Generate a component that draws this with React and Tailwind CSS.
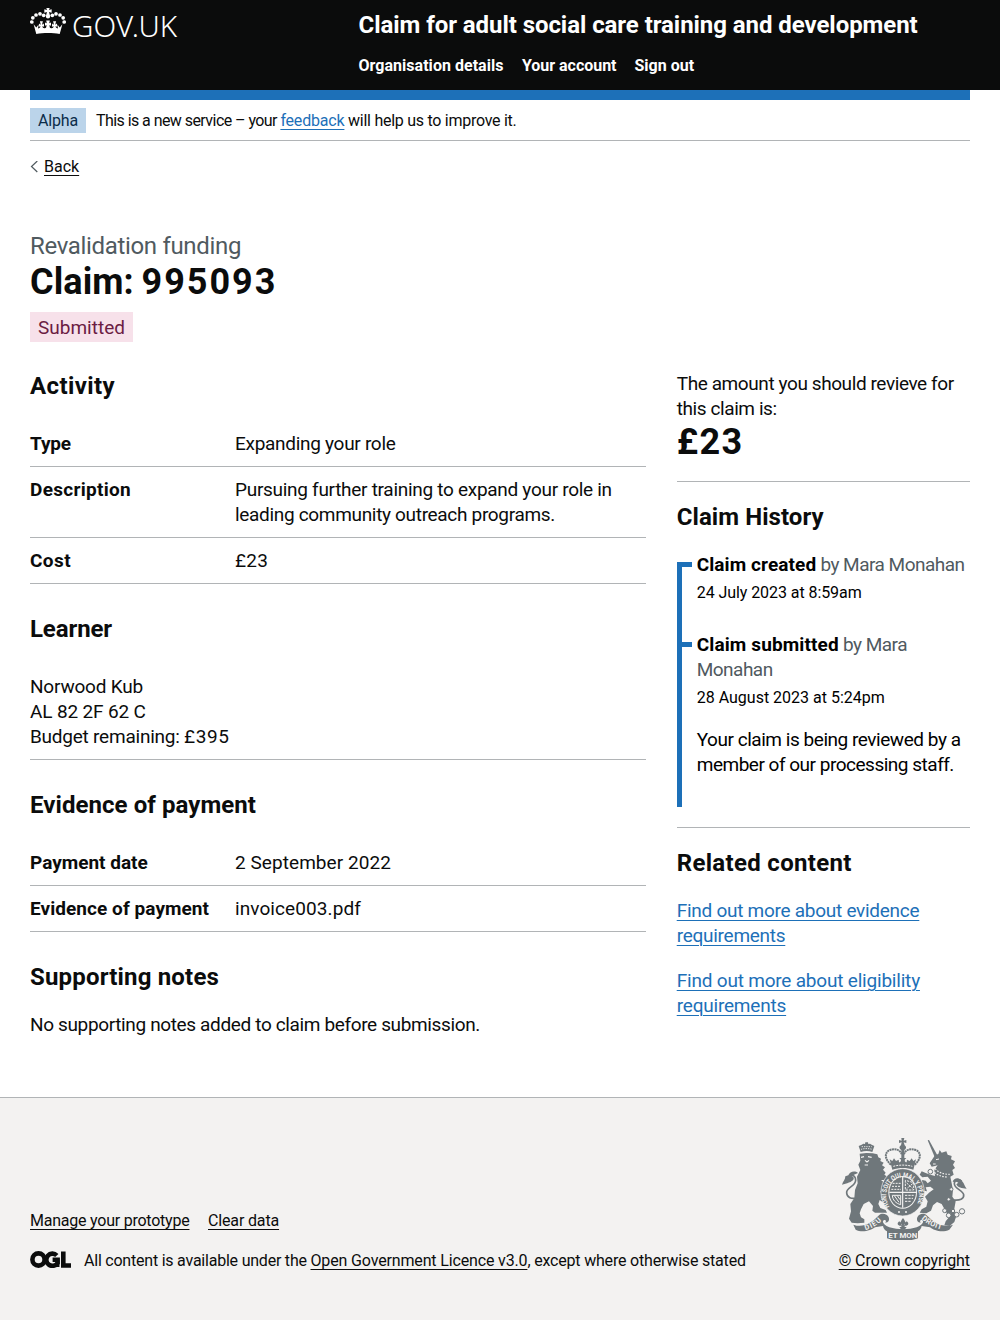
function Crown() {
  return (
    <svg className="h-[26px] w-9 shrink-0" viewBox="12 9 108 78" fill="#fff" aria-hidden="true">
      <circle cx="17.5" cy="51" r="5.6" />
      <circle cx="20.5" cy="38.5" r="5.6" />
      <circle cx="30" cy="30" r="5.6" />
      <circle cx="42" cy="26.5" r="5.6" />
      <circle cx="53" cy="31" r="5.6" />
      <circle cx="79" cy="31" r="5.6" />
      <circle cx="90" cy="26.5" r="5.6" />
      <circle cx="102" cy="30" r="5.6" />
      <circle cx="111.5" cy="38.5" r="5.6" />
      <circle cx="114.5" cy="51" r="5.6" />
      <path d="M61 9h10l-2 6 8-2v10l-8-2 3.500 13a6.500 6.500 0 1 1-13 0L63 21l-8 2V13l8 2z" />
      <path d="M27 87l-9-28 9 9 7-8-1 11c4 0 7-2 8-6l-6 1 1-9 6 3-3-10h10l-3 10 6-3 1 9-6-1c1 5 5 7 11 5 2-1 3-5 3-9l-5 2v-9l6 2-2-8h12l-2 8 6-2v9l-5-2c0 4 1 8 3 9 6 2 10 0 11-5l-6 1 1-9 6 3-3-10h10l-3 10 6-3 1 9-6-1c1 4 4 6 8 6l-1-11 7 8 9-9-9 28c-24-4-54-4-78 0z" transform="translate(6.600 -3.500) scale(.9 1.040)" />
    </svg>
  );
}

function Ogl() {
  return (
    <svg className="h-[17px] w-[41px] shrink-0" viewBox="0 0 41 17" fill="none" stroke="#0b0c0c" strokeWidth="4.600" aria-hidden="true">
      <circle cx="8.500" cy="8.500" r="6.100" />
      <path d="M26.800 4.500A6.100 6.100 0 1 0 27.600 12V8.700h-5" />
      <path d="M27.700 8.500V16" strokeWidth="3.500" />
      <path d="M33.300.5v14h7.700" />
    </svg>
  );
}

function Crest() {
  return (
    <svg className="h-[103px] w-[125px]" viewBox="51 21 375 309" fill="#6f777b" aria-hidden="true">
      {/* lion */}
      <path d="M107 66l-6-18 9-4 5-3 5 1 1-5h8l1 5 5-1 5 3 8 4-6 18c-10-4-24-4-35 0z" />
      <path d="M108 58c10-3 23-3 34 0M110 50h30" stroke="#f3f2f1" strokeWidth="2.500" strokeDasharray="4 3" fill="none" />
      <path d="M104 71l20-2 19 1 14 3 3 9 8 4-2 7 10 5-5 8 9 6-6 7 8 9-4 6 12 8-10 8-12 0 10 8-4 6 12 8-4 8-12-2-4 8 10 8-4 10 12 10-6 6-14-10-4 12 6 12 16 6 4 8h-36l-8-6 2-14-12-14-16 8-8 16-4 12 4 12 10 6v10l-20 2-18-2-8-12 6-22-2-22 12-18 2-24 8-20-2-20 10-20-6-16 6-12z" />
      <path d="M97 203c-18 6-31-1-32-14-2-18 26-18 27-38 0-11-6-16-14-14" fill="none" stroke="#6f777b" strokeWidth="5" />
      <path d="M99 129c-10-8-25-4-29 7l-9 3c0 10-7 15-10 25 13-4 31-7 35-17 1-5-2-8-6-8 5-5 12-7 19-10z" />
      <path d="M108 82l9-2m12 0 11 2m-20 9 6 5 6-5m-13 14h10" stroke="#f3f2f1" strokeWidth="3.500" fill="none" />
      {/* unicorn */}
      <path d="M308 31l4-1 25 46-8 5z" />
      <path d="M330 76l10-4 4-12 6 8 14-4 4 10 12 4-2 10 12 6-6 10 6 10-8 6 4 14-10 6 4 20 4 20-2 20 10 14-4 22 6 22-6 18-14 12-16-2 4-12 10-12-10-18-12-22-14-6-12 10-6 16-14 8-20-2 6-10 14-8 4-16-8-14 12-12 14-10-10-8-14 2 4 12-10-2-8-22 4-10 10 2 6 8 10-8-10-12-16 2-8-8 6-10 14 6 12 4 14 4-2-18 10-14-8 2-10 2-6-10 8-12z" />
      <path d="M330 116c12 12 25 17 44 17M328 127c12 10 24 14 42 14" stroke="#f3f2f1" strokeWidth="3.500" strokeDasharray="5 4" fill="none" />
      <path d="M333 89l9-2m-18 15 8 0" stroke="#f3f2f1" strokeWidth="3" />
      <path d="M384 210c20 2 34-2 32-16-3-15-29-17-28-34 1-13 14-14 22-6" fill="none" stroke="#6f777b" strokeWidth="5" />
      <path d="M383 156c3-13 20-15 28-3 8 8 7 16 14 23-14 0-28-4-31-13l6-5c-5-4-10-3-17-2z" />
      <g stroke="#6f777b" strokeWidth="3" fill="#f3f2f1">
        <circle cx="316" cy="125" r="7" /><circle cx="359" cy="242" r="6" /><circle cx="371" cy="256" r="7" /><circle cx="384" cy="243" r="5" /><circle cx="395" cy="254" r="7" /><circle cx="411" cy="244" r="8" /><circle cx="379" cy="178" r="5" /><circle cx="371" cy="208" r="5" />
      </g>
      {/* garter and quartered shield */}
      <ellipse cx="233" cy="187" rx="65" ry="71" stroke="#f3f2f1" strokeWidth="2" />
      <ellipse cx="233" cy="187" rx="43" ry="49" fill="#f3f2f1" />
      <ellipse cx="233" cy="187" rx="40" ry="46" />
      <path d="M233 141v92M193 187h80" stroke="#f3f2f1" strokeWidth="3.500" />
      <g stroke="#f3f2f1" fill="none" strokeWidth="3">
        <path d="M203 160h25m-27 9h27m-29 9h29" strokeDasharray="6 3" />
        <path d="M241 151v29h25v-22zm4 8 18 16m0-14-18 15M240 196h26m-26 9h24m-24 9h20" strokeDasharray="7 3" />
        <path d="M202 196c1 14 10 24 25 28v-28zm6 1 14 20m-5-20 8 12" />
      </g>
      <path id="garter-text" d="M195 232A49 55 0 1 1 271 232" fill="none" />
      <text fill="#f3f2f1" className="font-['Roboto',sans-serif] text-[21px] font-bold"><textPath href="#garter-text" textLength="222" startOffset="2" lengthAdjust="spacingAndGlyphs">HONI SOIT QUI MAL Y PENSE</textPath></text>
      <circle cx="222" cy="246" r="3" fill="#f3f2f1" /><circle cx="243" cy="246" r="3" fill="#f3f2f1" />
      {/* royal crown */}
      <path d="M229 24h9l-2 8 8-2v9l-8-2 3 9c7 5 4 12-1 14v44h-9V60c-6-3-8-10-1-14l2-9-8 2v-9l8 2z" />
      <path d="M198 104C179 88 177 67 195 60c16-6 32 0 35 13M269 104c19-16 21-37 3-44-16-6-32 0-35 13" fill="none" stroke="#6f777b" strokeWidth="6" strokeDasharray="6 1.500" />
      <path d="M202 119l-8-31 8 5 5-8 6 8 8-4 1 8c7-1 6-8 6-8l-5-5h21l-5 5s-1 7 6 8l1-8 8 4 6-8 5 8 8-5-8 31c-20-7-43-7-63 0z" />
      <path d="M205 109c18-5 38-5 57 0" stroke="#f3f2f1" strokeWidth="3" strokeDasharray="6 3" fill="none" />
      {/* motto ribbon */}
      <path d="M85 284c28 10 52-2 77-28 10-9 25-3 29 6 4 11-3 18-11 15 5-1 3-9-3-7-8 5-1 15 16 22 25 7 57 8 82 0 17-7 24-17 16-22-6-2-8 6-3 7-8 3-15-4-11-15 4-9 18-15 28-6 25 26 51 38 79 28l-11 15c-21 11-47 2-58-7l-25-4c-1 8-6 13-11 16v21c-29 10-64 10-93 0v-21c-6-3-11-8-12-16l-24 4c-12 9-39 18-58 7z" />
      <path id="dieu-text" d="M121 301q34-10 52-33" fill="none" />
      <path id="droit-text" d="M289 267q25 24 67 33" fill="none" />
      <g fill="#f3f2f1" className="font-['Roboto',sans-serif] text-[22px] font-bold">
        <text><textPath href="#dieu-text" textLength="58">DIEU</textPath></text>
        <text><textPath href="#droit-text" textLength="68">DROIT</textPath></text>
        <text x="190" y="324" textLength="87" lengthAdjust="spacingAndGlyphs">ET MON</text>
      </g>
      <path d="M234 264c11 13 5 17 2 22 5-1 2-15 11-11 6 5 2 12-5 12h-3v4h6l-6 8h-10l-6-8h6v-4h-3c-7 0-11-7-5-12 9-4 6 10 11 11-3-5-9-9 2-22z" />
    </svg>
  );
}

function Row({ label, children, labelClass = "", valueClass = "" }) {
  return (
    <div className="flex border-b border-[#b1b4b6] py-2.5">
      <dt className={`w-[205px] shrink-0 font-bold ${labelClass}`}>{label}</dt>
      <dd className={valueClass}>{children}</dd>
    </div>
  );
}

const link = "underline decoration-1 underline-offset-[3px]";

export default function App() {
  return (
    <div className="min-h-[1320px] bg-white font-['Roboto',sans-serif] text-[19px] leading-[25px] text-[#0b0c0c]">
      <header className="flex h-[90px] bg-[#0b0c0c] px-[30px] text-white">
        <div className="flex w-[328.500px] shrink-0 items-start gap-1.5 pt-2">
          <Crown />
          <span className="pt-[2px] font-['Noto_Sans',sans-serif] text-[29.500px] leading-[32px] font-light tracking-[0.100px]">GOV.UK</span>
        </div>
        <div className="whitespace-nowrap pt-2.5">
          <div className="text-[24px] leading-[30px] font-bold tracking-[-0.060px]">Claim for adult social care training and development</div>
          <nav className="mt-4 flex text-[16px] leading-5 font-bold">
            <a className="w-[163.500px] tracking-[0.030px]">Organisation details</a>
            <a className="w-[112.500px] tracking-[-0.030px]">Your account</a>
            <a>Sign out</a>
          </nav>
        </div>
      </header>

      <div className="mx-[30px] border-t-[10px] border-[#1d70b8]">
        <div className="flex items-center border-b border-[#b1b4b6] pt-2 pb-[7px] text-[16px] leading-5">
          <strong className="mr-2.5 w-14 bg-[#bbd4ea] px-2 pt-[3px] pb-[2px] font-normal tracking-[-0.170px] text-[#0c2d4a]">Alpha</strong>
          <span className="whitespace-pre tracking-[-0.560px]">This is a new service – your </span>
          <a className={`${link} tracking-[-0.190px] text-[#1d70b8]`}>feedback</a>
          <span className="whitespace-pre tracking-[-0.270px]"> will help us to improve it.</span>
        </div>
        <div className="mt-4 flex h-5 items-center text-[16px] leading-5">
          <svg className="mr-1.5 h-3 w-2" viewBox="0 0 8 12" fill="none" stroke="#505a5f" strokeWidth="1.200"><path d="M7.300 0 1.500 5.500 7.300 11" /></svg>
          <a className={link}>Back</a>
        </div>

        <h1 className="mt-[54px]">
          <span className="block text-[24px] leading-[30px] tracking-[-0.330px] text-[#505a5f]">Revalidation funding</span>
          <span className="flex pt-px text-[36px] leading-10 font-bold">
            <span className="w-[111.500px] tracking-[0.100px]">Claim:</span>
            <span className="tracking-[2px]">995093</span>
          </span>
        </h1>
        <strong className="mt-2.5 block h-[30px] w-[103px] bg-[#f7e1ea] px-2 pt-[3px] font-normal text-[#6b1c43]">Submitted</strong>

        <div className="mt-[29px] flex justify-between">
          <main className="w-[616px]">
            <h2 className="text-[24px] leading-[30px] font-bold tracking-[0.400px]">Activity</h2>
            <dl className="mt-5">
              <Row label="Type" labelClass="tracking-[-0.140px]" valueClass="tracking-[-0.290px]">Expanding your role</Row>
              <Row label="Description" labelClass="tracking-[0.290px]" valueClass="tracking-[-0.290px]">Pursuing further training to expand your role in<br /><span className="tracking-[-0.320px]">leading community outreach programs.</span></Row>
              <Row label="Cost" labelClass="tracking-[0.410px]" valueClass="tracking-[0.200px]">£23</Row>
            </dl>
            <h2 className="mt-[30px] text-[24px] leading-[30px] font-bold tracking-[-0.110px]">Learner</h2>
            <p className="mt-5 border-b border-[#b1b4b6] py-2.5">
              <span className="block tracking-[-0.200px]">Norwood Kub</span>
              <span className="block tracking-[-0.150px]">AL 82 2F 62 C</span>
              <span className="block"><span className="tracking-[-0.230px]">Budget remaining: </span><span className="tracking-[0.600px]">£395</span></span>
            </p>
            <h2 className="mt-[30px] text-[24px] leading-[30px] font-bold tracking-[0.070px]">Evidence of payment</h2>
            <dl className="mt-5">
              <Row label="Payment date" valueClass="tracking-[0.060px]">2 September 2022</Row>
              <Row label="Evidence of payment" labelClass="tracking-[0.060px]" valueClass="tracking-[0.090px]">invoice003.pdf</Row>
            </dl>
            <h2 className="mt-[30px] text-[24px] leading-[30px] font-bold tracking-[0.180px]">Supporting notes</h2>
            <p className="mt-5 tracking-[-0.360px]">No supporting notes added to claim before submission.</p>
          </main>

          <aside className="w-[293.300px] whitespace-nowrap">
            <p className="tracking-[-0.410px]">The amount you should revieve for<br />this claim is:</p>
            <p className="border-b border-[#b1b4b6] pt-px pb-[19px] text-[36px] leading-10 font-bold tracking-[1.400px]">£23</p>
            <h2 className="mt-5 text-[24px] leading-[30px] font-bold tracking-[0.070px]">Claim History</h2>
            <div className="mt-[30px] flex h-[245px] border-l-[5px] border-[#1d70b8]">
              <div className="flex flex-col text-black">
                <div className="-mt-2.5 flex h-20 items-start">
                  <i className="mt-2.5 mr-[5px] h-[5px] w-2.5 bg-[#1d70b8]" />
                  <div>
                    <h3><b className="tracking-[0.090px]">Claim created</b><span className="tracking-[-0.520px] text-[#505a5f]"> by Mara Monahan</span></h3>
                    <time className="mt-[6px] block text-[16px] leading-5 tracking-[-0.070px]">24 July 2023 at 8:59am</time>
                  </div>
                </div>
                <div className="flex items-start">
                  <i className="mt-2.5 mr-[5px] h-[5px] w-2.5 bg-[#1d70b8]" />
                  <div>
                    <h3><b className="tracking-[0.120px]">Claim submitted</b><span className="tracking-[-0.510px] text-[#505a5f]"> by Mara<br />Monahan</span></h3>
                    <time className="mt-[6px] block text-[16px] leading-5">28 August 2023 at 5:24pm</time>
                    <p className="mt-[19px] tracking-[-0.460px]">Your claim is being reviewed by a<br /><span className="tracking-[-0.490px]">member of our processing staff.</span></p>
                  </div>
                </div>
              </div>
            </div>
            <hr className="mt-5 border-[#b1b4b6]" />
            <h2 className="mt-5 text-[24px] leading-[30px] font-bold tracking-[0.320px]">Related content</h2>
            <div className="mt-5 flex flex-col gap-5 text-[#1d70b8]">
              <a className={`${link} tracking-[-0.270px]`}>Find out more about evidence<br />requirements</a>
              <a className={`${link} tracking-[-0.200px]`}>Find out more about eligibility<br />requirements</a>
            </div>
          </aside>
        </div>
      </div>

      <footer className="mt-[60px] flex h-[223px] justify-between border-t border-[#b1b4b6] bg-[#f3f2f1] px-[30px] text-[16px] leading-5 whitespace-nowrap">
        <div className="pt-[113px]">
          <div className="flex">
            <a className={`${link} w-[178px] tracking-[-0.230px]`}>Manage your prototype</a>
            <a className={`${link} tracking-[-0.150px]`}>Clear data</a>
          </div>
          <div className="mt-5 flex items-start">
            <Ogl />
            <span className="ml-[13px]">
              <span className="tracking-[-0.220px]">All content is available under the </span>
              <a className={`${link} tracking-[-0.150px]`}>Open Government Licence v3.0</a>
              <span className="tracking-[-0.190px]">, except where otherwise stated</span>
            </span>
          </div>
        </div>
        <div className="flex flex-col items-end pt-[39px]">
          <div className="mr-[3px]"><Crest /></div>
          <a className={`${link} mt-[11px] tracking-[-0.070px]`}>© Crown copyright</a>
        </div>
      </footer>
    </div>
  );
}
